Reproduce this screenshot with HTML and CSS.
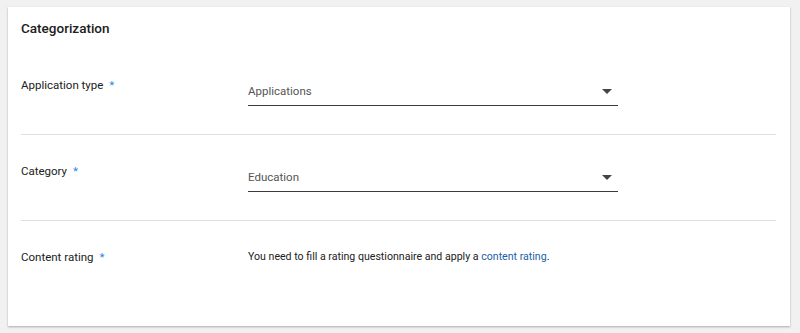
FILE: index.html
```html
<!DOCTYPE html>
<html lang="en">
<head>
  <meta charset="UTF-8">
  <title>Categorization</title>
  <link rel="stylesheet" href="styles.css">
</head>
<body>
  <div class="card">
    <h2 class="card-title">Categorization</h2>

    <div class="row">
      <div class="label">Application type <span class="req">*</span></div>
      <div class="field">
        <div class="select">
          <span class="select-value">Applications</span>
          <span class="caret"></span>
        </div>
      </div>
    </div>

    <div class="row">
      <div class="label">Category <span class="req">*</span></div>
      <div class="field">
        <div class="select">
          <span class="select-value">Education</span>
          <span class="caret"></span>
        </div>
      </div>
    </div>

    <div class="row last">
      <div class="label">Content rating <span class="req">*</span></div>
      <div class="field">
        <p class="note">You need to fill a rating questionnaire and apply a <a href="#">content rating</a>.</p>
      </div>
    </div>
  </div>
</body>
</html>
```

FILE: styles.css
```css
body {
  margin: 0;
  padding: 7px 10px 7px 8px;
  background-color: #f1f1f1;
  font-family: Roboto, "Liberation Sans", Arial, sans-serif;
  color: #212121;
}
.card {
  height: 319px;
  box-sizing: border-box;
  background: white;
  padding: 11px 14px 0 13px;
  box-shadow: 0 1px 2px rgba(0,0,0,0.3);
}
.card-title {
  margin: 0 0 11px;
  font-size: 13.5px;
  font-weight: 500;
  line-height: 20px;
  color: #202020;
}
.row {
  display: grid;
  grid-template-columns: 227px 370px;
  height: 86px;
  box-sizing: border-box;
  padding-top: 27px;
  border-bottom: 1px solid #e0e0e0;
}
.row.last {
  border-bottom: none;
}
.label {
  font-size: 11.5px;
  line-height: 18px;
  color: #212121;
}
.req {
  color: #1e88e5;
  margin-left: 3px;
}
.select {
  display: flex;
  align-items: center;
  justify-content: space-between;
  padding: 6px 6px 5px 0;
  border-bottom: 1px solid #3a3a3a;
}
.select-value {
  font-size: 11.5px;
  line-height: 18px;
  color: #555;
}
.caret {
  width: 0;
  height: 0;
  border-left: 5px solid transparent;
  border-right: 5px solid transparent;
  border-top: 5px solid #444;
}
.note {
  margin: 0;
  font-size: 10.6px;
  line-height: 18px;
  color: #212121;
}
.note a {
  color: #1a5ea8;
  text-decoration: none;
}
```
